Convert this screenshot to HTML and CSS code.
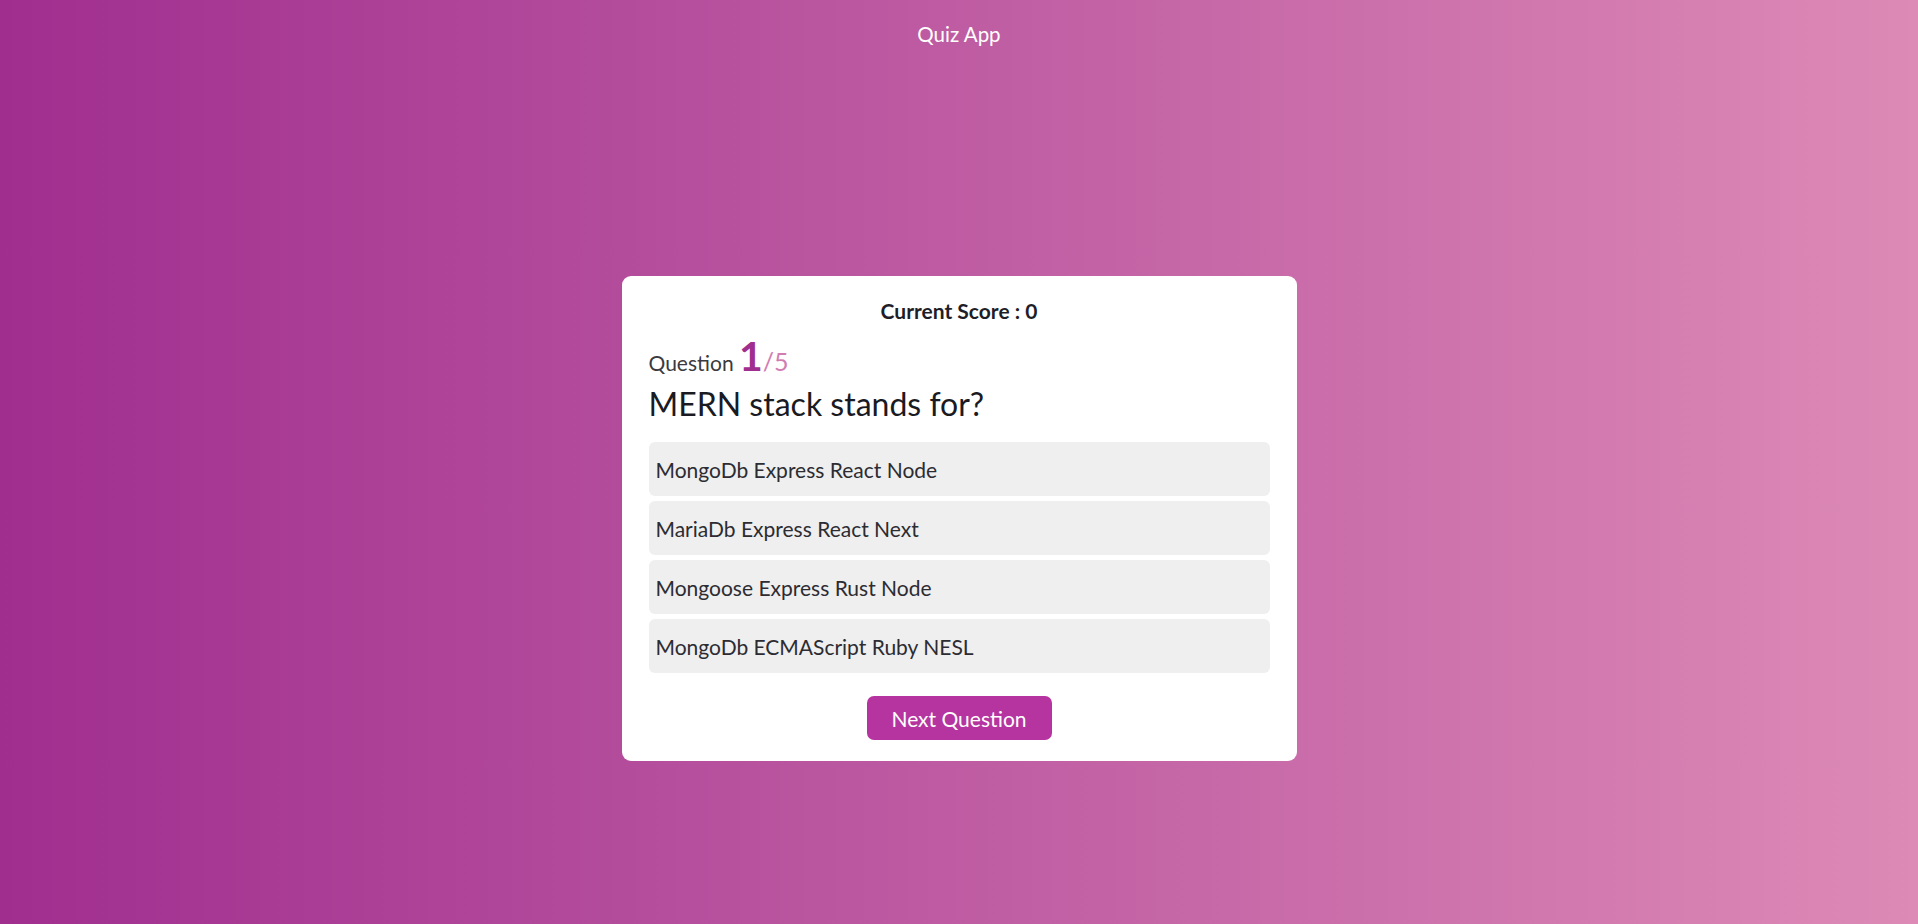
FILE: index.html
```html
<!DOCTYPE html>
<html lang="en">
<head>
<meta charset="utf-8">
<title>Quiz App</title>
<link rel="stylesheet" href="styles.css">
</head>
<body>
  <header class="app-header">Quiz App</header>
  <main class="stage">
    <section class="card">
      <div class="score">Current Score : 0</div>
      <div class="counter">Question <span class="num">1</span><span class="total">/5</span></div>
      <h1 class="question">MERN stack stands for?</h1>
      <ul class="options">
        <li class="option">MongoDb Express React Node</li>
        <li class="option">MariaDb Express React Next</li>
        <li class="option">Mongoose Express Rust Node</li>
        <li class="option">MongoDb ECMAScript Ruby NESL</li>
      </ul>
      <div class="actions"><button class="next">Next Question</button></div>
    </section>
  </main>
</body>
</html>
```
FILE: styles.css
```css
* { box-sizing: border-box; }
html, body { height: 100%; }
body {
  margin: 0;
  font-family: "Lato", "Open Sans", sans-serif;
  background: linear-gradient(90deg, #a02e8f 0%, #dd8ab6 100%);
  color: #1e1e28;
  min-height: 924px;
}
.app-header {
  text-align: center;
  color: #fff;
  font-size: 20.5px;
  padding-top: 22px;
  height: 68px;
}
.stage {
  display: flex;
  justify-content: center;
  padding-top: 208px;
}
.card {
  width: 675px;
  background: #fff;
  border-radius: 9px;
  padding: 22px 27px 21px;
}
.score {
  text-align: center;
  font-weight: 700;
  font-size: 21px;
  line-height: 26px;
}
.counter {
  margin-top: 10px;
  font-size: 21px;
  font-weight: 400;
  color: #3a3a40;
  line-height: 44px;
}
.counter .num {
  font-size: 41px;
  font-weight: 700;
  color: #a02e8f;
}
.counter .total {
  font-size: 25px;
  color: #d27db2;
  font-weight: 400;
}
.question {
  margin: 0;
  font-size: 32px;
  font-weight: 400;
  line-height: 37px;
  color: #1a1a22;
}
.options {
  list-style: none;
  margin: 20px 0 0;
  padding: 0;
  display: flex;
  flex-direction: column;
  gap: 5px;
}
.option {
  background: #efefef;
  border-radius: 6px;
  height: 54px;
  display: flex;
  align-items: center;
  padding: 0 7px;
  font-size: 21px;
  font-weight: 400;
  color: #2c2c32;
}
.actions {
  display: flex;
  justify-content: center;
  margin-top: 23px;
}
.next {
  width: 185px;
  height: 44px;
  border: none;
  border-radius: 7px;
  background: #b5349f;
  color: #fff;
  font-family: inherit;
  font-size: 21px;
}
```
